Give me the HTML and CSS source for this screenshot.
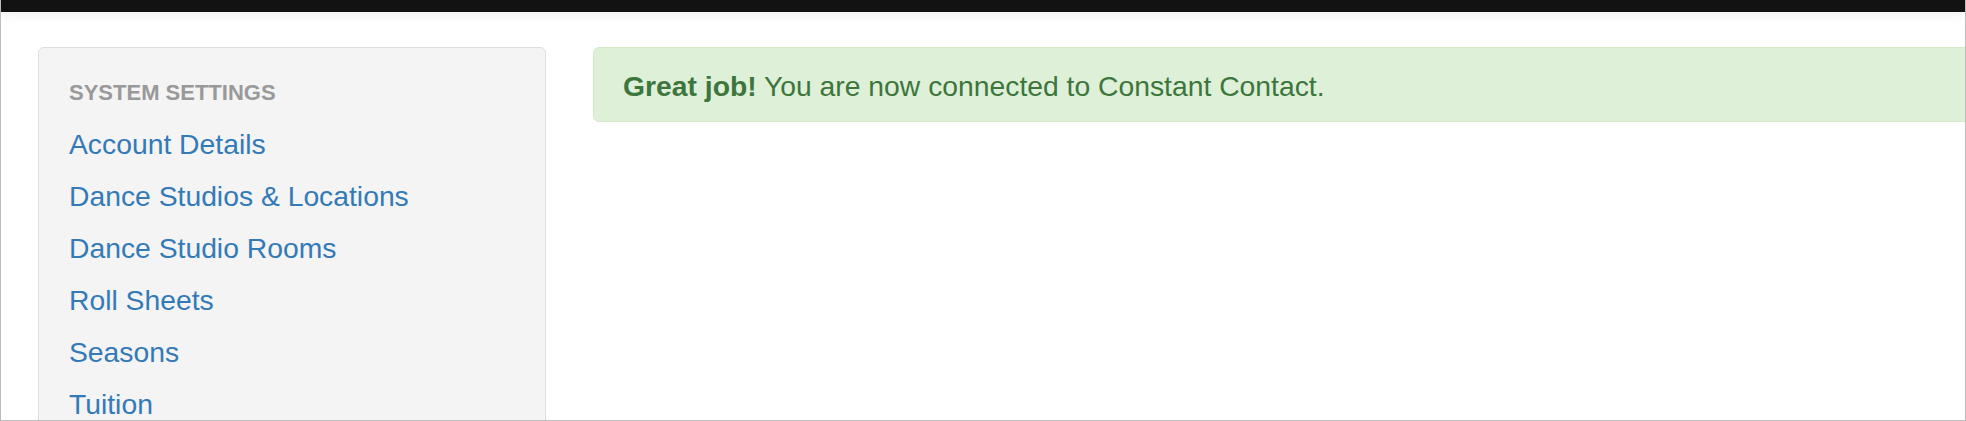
FILE: index.html
```html
<!DOCTYPE html>
<html>
<head>
<meta charset="utf-8">
<link rel="stylesheet" href="styles.css">
</head>
<body>
<div class="frame">
  <div class="topbar"></div>
  <div class="layout">
    <aside class="sidebar">
      <h3 class="sidebar-title">SYSTEM SETTINGS</h3>
      <ul class="nav">
        <li><a href="#">Account Details</a></li>
        <li><a href="#">Dance Studios &amp; Locations</a></li>
        <li><a href="#">Dance Studio Rooms</a></li>
        <li><a href="#">Roll Sheets</a></li>
        <li><a href="#">Seasons</a></li>
        <li><a href="#">Tuition</a></li>
      </ul>
    </aside>
    <main class="content">
      <div class="alert"><strong>Great job!</strong> You are now connected to Constant Contact.</div>
    </main>
  </div>
</div>
</body>
</html>
```
FILE: styles.css
```css
html, body {
  margin: 0;
  padding: 0;
  background: #fff;
}
body {
  font-family: "Liberation Sans", Arial, Helvetica, sans-serif;
}
.frame {
  box-sizing: border-box;
  width: 1966px;
  height: 421px;
  border: 1px solid #bdbdbd;
  border-top: none;
  overflow: hidden;
  background: #fff;
}
.topbar {
  position: relative;
  z-index: 2;
  height: 12px;
  margin: 0 -1px;
  background: #121212;
  box-shadow: 0 3px 12px rgba(0, 0, 0, 0.07);
}
.layout {
  display: flex;
  align-items: flex-start;
  gap: 47px;
  padding: 35px 0 0 37px;
}
.sidebar {
  flex: 0 0 auto;
  box-sizing: border-box;
  width: 508px;
  min-height: 420px;
  background: #f4f4f4;
  border: 1px solid #dedede;
  border-radius: 6px;
  padding: 34px 30px 0 30px;
}
.sidebar-title {
  margin: 0 0 14px 0;
  font-size: 22px;
  line-height: 22px;
  font-weight: bold;
  color: #999;
}
.nav {
  list-style: none;
  margin: 0;
  padding: 0;
}
.nav li {
  font-size: 28.3px;
  line-height: 52px;
}
.nav a {
  color: #337ab7;
  text-decoration: none;
}
.content {
  flex: 1 1 auto;
  margin-right: -60px;
}
.alert {
  box-sizing: border-box;
  height: 75px;
  padding: 22px 29px 18px 29px;
  font-size: 28.3px;
  line-height: 33px;
  color: #3c763d;
  background: #dff0d8;
  border: 1px solid #d6e9c6;
  border-radius: 6px;
}
.alert strong {
  font-weight: bold;
}
```
